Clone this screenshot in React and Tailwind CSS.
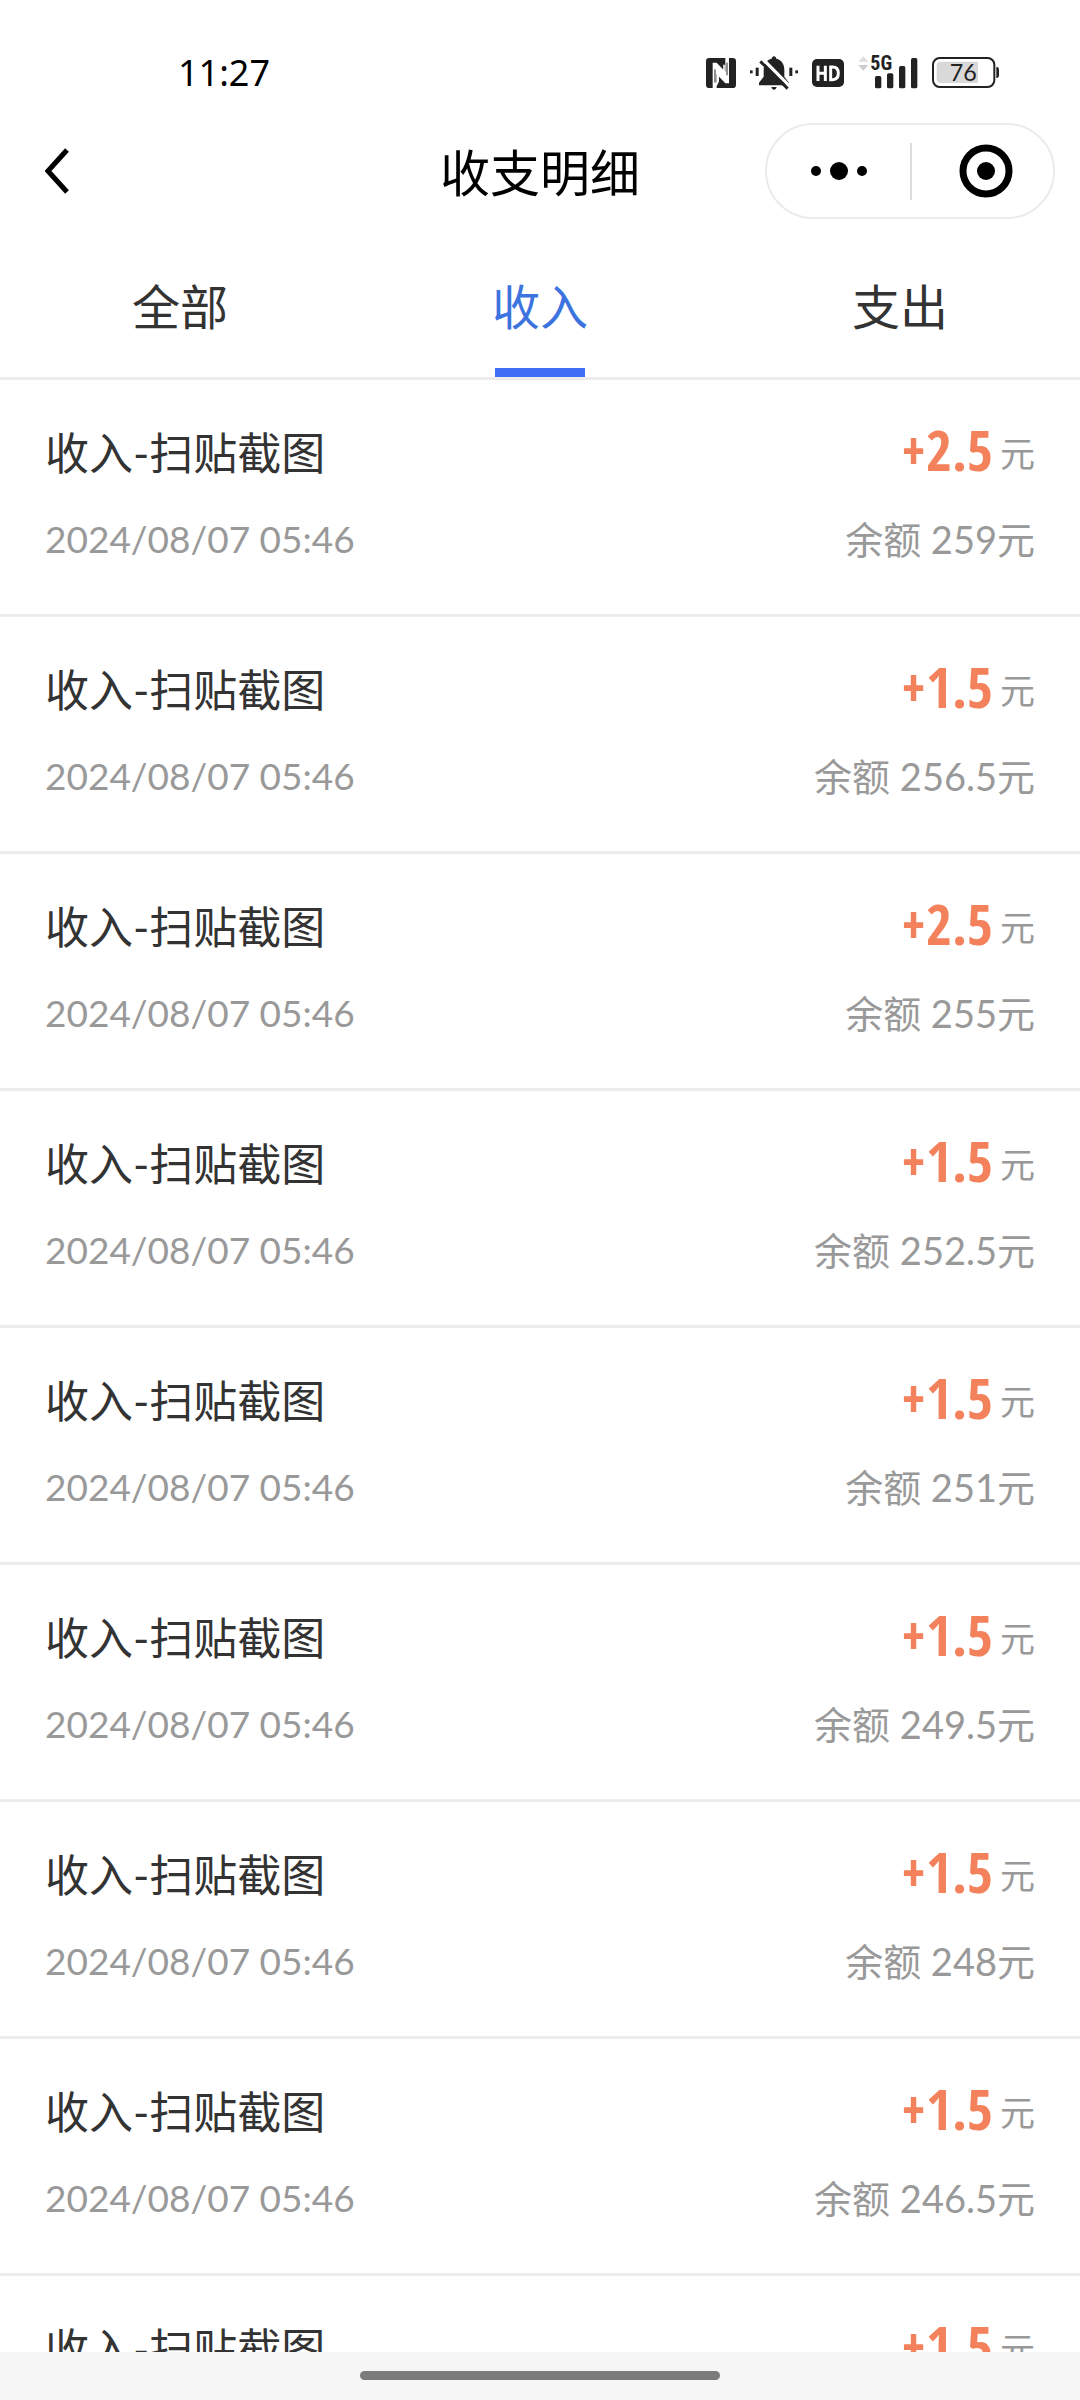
import React, { useState } from "react";
import clsx from "clsx";

const TABS = ["全部", "收入", "支出"];

const RECORDS = [
  { id: 1, amount: 2.5, balance: 259 },
  { id: 2, amount: 1.5, balance: 256.5 },
  { id: 3, amount: 2.5, balance: 255 },
  { id: 4, amount: 1.5, balance: 252.5 },
  { id: 5, amount: 1.5, balance: 251 },
  { id: 6, amount: 1.5, balance: 249.5 },
  { id: 7, amount: 1.5, balance: 248 },
  { id: 8, amount: 1.5, balance: 246.5 },
  { id: 9, amount: 1.5, balance: 245 },
];

const NfcIcon = () => (
  <svg viewBox="0 0 90 90" className="h-[30px] w-[30px]" aria-hidden="true">
    <rect width="90" height="90" rx="10" fill="#222" />
    <path d="M20 90V14H32L58 41V0H69V76H58L32 49V90Z" fill="#fff" />
    <path d="M36 48V70L30 82" fill="none" stroke="#fff" strokeWidth="6" />
    <path d="M54 42V20" stroke="#fff" strokeWidth="5" />
    <path d="M27 34V74M63 14V52" stroke="#222" strokeWidth="3" />
  </svg>
);

const MuteBellIcon = () => (
  <svg viewBox="0 0 144 102" className="h-[34px] w-[48px]" aria-hidden="true">
    <g fill="#222">
      <path d="M72 1C76 1 78 4 79 8C95 12 103 24 103 42V62L117 80V88H27V80L41 62V42C41 24 49 12 65 8C66 4 68 1 72 1Z" />
      <path d="M64 93H80C79 98 76 101 72 101S65 98 64 93Z" />
      <rect x="0" y="43" width="8" height="9" />
      <rect x="17" y="35" width="9" height="25" />
      <rect x="118" y="35" width="9" height="25" />
      <rect x="136" y="43" width="8" height="9" />
    </g>
    <path d="M38 9L120 92" stroke="#fff" strokeWidth="10" />
    <path d="M31 16L113 98" stroke="#222" strokeWidth="9" />
  </svg>
);

const HdIcon = () => (
  <svg viewBox="0 0 96 84" className="h-[28px] w-[32px]" aria-hidden="true">
    <rect width="96" height="84" rx="15" fill="#222" />
    <path
      d="M18 20V66M40 20V66M18 43H40M56 24V62H62C74 62 79 54 79 43S74 24 62 24Z"
      fill="none"
      stroke="#fff"
      strokeWidth="9"
    />
  </svg>
);

const SignalIcon = () => (
  <svg viewBox="0 0 180 99" className="h-[33px] w-[60px] overflow-visible" aria-hidden="true">
    <path d="M1 17L16 1L31 17Z" fill="#ddd" />
    <path d="M1 27L16 44L31 27Z" fill="#ccc" />
    <text x="37" y="42" fontSize="60" fontWeight="700" fill="#222" className="font-['Roboto_Condensed',sans-serif]">
      5G
    </text>
    <g fill="#222">
      <rect x="51" y="60" width="19" height="37" rx="5" />
      <rect x="87" y="52" width="19" height="45" rx="5" />
      <rect x="123" y="30" width="19" height="67" rx="5" />
      <rect x="159" y="6" width="19" height="91" rx="5" />
    </g>
  </svg>
);

const BatteryIcon = () => (
  <svg viewBox="0 0 201 93" className="h-[31px] w-[67px]" aria-hidden="true">
    <rect x="3" y="3" width="184" height="87" rx="20" fill="#fff" stroke="#222" strokeWidth="6" />
    <path d="M26 14H138V78H26Q14 78 14 66V26Q14 14 26 14Z" fill="#d9d9d9" />
    <path d="M193 30H196Q201 31 201 38V55Q201 62 196 63H193Z" fill="#222" />
    <text x="94" y="71" fontSize="70" textAnchor="middle" fill="#222" className="font-['Lato',sans-serif]">
      76
    </text>
  </svg>
);

const StatusBar = () => (
  <div className="flex h-[123px] shrink-0 items-center justify-between pr-[81px] pl-[178px] pt-[22px]">
    <span className="font-['Noto_Sans',sans-serif] text-[36px] leading-none text-black">11:27</span>
    <div className="flex items-center gap-[14px]">
      <NfcIcon />
      <MuteBellIcon />
      <HdIcon />
      <SignalIcon />
      <BatteryIcon />
    </div>
  </div>
);

const NavBar = () => (
  <header className="grid h-[96px] shrink-0 grid-cols-[1fr_auto_1fr] items-center px-[25px]">
    <button type="button" aria-label="返回" className="flex h-full w-[64px] items-center pl-[20px]">
      <svg viewBox="0 0 24 46" className="h-[46px] w-[24px]" aria-hidden="true">
        <path d="M22 2L3 23L22 44" fill="none" stroke="#000" strokeWidth="5" />
      </svg>
    </button>
    <h1 className="pt-1 text-[50px] leading-none text-black">收支明细</h1>
    <div className="flex h-[96px] w-[290px] items-center justify-self-end rounded-full border-2 border-[#ebebeb]">
      <button type="button" aria-label="更多" className="flex h-full w-[143px] items-center justify-center">
        <svg viewBox="0 0 56 18" className="h-[18px] w-[56px]" aria-hidden="true">
          <circle cx="5" cy="9" r="5" />
          <circle cx="28" cy="9" r="9" />
          <circle cx="51" cy="9" r="5" />
        </svg>
      </button>
      <span className="h-[57px] w-[2px] bg-[#dcdcdc]" />
      <button type="button" aria-label="关闭" className="flex h-full flex-1 items-center justify-center pl-[6px]">
        <svg viewBox="0 0 54 54" className="h-[54px] w-[54px]" aria-hidden="true">
          <circle cx="27" cy="27" r="23" fill="none" stroke="#000" strokeWidth="7" />
          <circle cx="27" cy="27" r="9" />
        </svg>
      </button>
    </div>
  </header>
);

const Tabs = ({ active, onChange }) => (
  <nav className="flex h-[161px] shrink-0 border-b-[3px] border-[#ececec] pt-[20px]">
    {TABS.map((tab) => (
      <button
        key={tab}
        type="button"
        onClick={() => onChange(tab)}
        className={clsx(
          "flex flex-1 flex-col items-center justify-between text-[48px]",
          tab === active ? "text-[#3d73df]" : "text-[#333]"
        )}
      >
        <span className="h-[129px] leading-[136px]">{tab}</span>
        <span className={clsx("h-[9px] w-[90px]", tab === active && "bg-[#3f6ff5]")} />
      </button>
    ))}
  </nav>
);

const RecordRow = ({ record }) => (
  <li className="flex h-[237px] shrink-0 flex-col gap-[22px] border-b-[3px] border-[#ececec] px-[45px] pt-[41px]">
    <div className="flex h-[64px] items-center justify-between">
      <span className="text-[44px] leading-[64px] text-[#333]">收入-扫贴截图</span>
      <span className="flex items-center gap-[7px]">
        <span className="pb-[8px] font-['Open_Sans_Condensed',sans-serif] text-[56px] leading-[56px] font-bold text-[#f3825c]">
          +{record.amount}
        </span>
        <span className="text-[35px] leading-[64px] text-[#999]">元</span>
      </span>
    </div>
    <div className="flex items-center justify-between leading-[64px] text-[#999]">
      <time className="text-[37px]">2024/08/07 05:46</time>
      <span className="text-[38px]">余额 {record.balance}元</span>
    </div>
  </li>
);

export default function App() {
  const [active, setActive] = useState("收入");

  return (
    <div className="flex h-screen flex-col overflow-hidden bg-white font-['Lato','Noto_Sans_CJK_SC',sans-serif]">
      <StatusBar />
      <NavBar />
      <Tabs active={active} onChange={setActive} />
      <ul className="flex min-h-0 flex-1 flex-col overflow-hidden">
        {RECORDS.map((record) => (
          <RecordRow key={record.id} record={record} />
        ))}
      </ul>
      <footer className="flex h-[48px] shrink-0 items-center justify-center bg-[#f6f6f6] pb-[2px]">
        <span className="h-[9px] w-1/3 rounded-full bg-[#7b7b7b]" />
      </footer>
    </div>
  );
}
